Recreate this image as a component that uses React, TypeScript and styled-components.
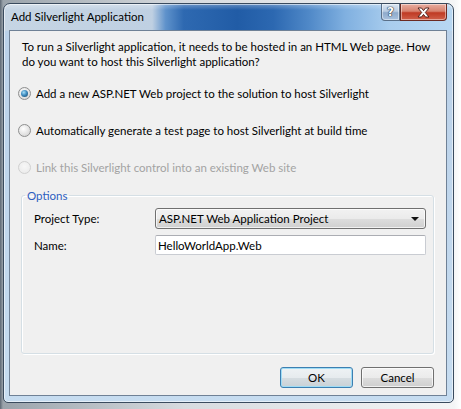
import * as React from 'react';
import styled, { createGlobalStyle } from 'styled-components';

const GlobalStyle = createGlobalStyle`
  html, body {
    margin: 0;
    padding: 0;
  }
  body {
    width: 461px;
    height: 409px;
    overflow: hidden;
    background: linear-gradient(90deg, #5d6874 0px, #9aa3ab 3px, #d7dbdf 40%, #f4f5f6 454px, #ffffff 461px);
    font-family: Lato, 'Open Sans', sans-serif;
  }
`;

const Desktop = styled.div`
  padding: 3px 0 0 3px;
`;

const Window = styled.div`
  width: 451px;
  height: 400px;
  box-sizing: border-box;
  display: flex;
  flex-direction: column;
  padding: 0 6px 6px 5px;
  border: 1px solid #3a4b5e;
  border-radius: 7px 7px 5px 5px;
  overflow: hidden;
  background:
    linear-gradient(180deg, rgba(255, 255, 255, 0.3), rgba(255, 255, 255, 0) 6px) top / 100% 27px no-repeat,
    linear-gradient(
        90deg,
        #c6d5e4 0%,
        #bfd0e2 33%,
        #5f92cb 36%,
        #2e69b1 40%,
        #215ca6 52%,
        #2c68b1 60%,
        #5089c8 68%,
        #80b0e0 76%,
        #a9cdee 86%,
        #b8d7f2 100%
      )
      top / 100% 27px no-repeat,
    linear-gradient(180deg, #b9d0e8, #c6dcf0);
  box-shadow: inset 0 0 0 1px rgba(255, 255, 255, 0.55);
`;

const TitleBar = styled.div`
  height: 26px;
  display: flex;
  align-items: flex-start;
`;

const TitleText = styled.span`
  padding: 5px 0 0 2px;
  font-size: 11.5px;
  line-height: 15px;
  color: #000;
`;

const Captions = styled.div`
  margin-left: auto;
  display: flex;
`;

const CaptionButton = styled.div<{ $kind: 'help' | 'close' }>`
  width: ${({ $kind }) => ($kind === 'help' ? '19px' : '47px')};
  height: 17px;
  box-sizing: border-box;
  display: flex;
  align-items: center;
  justify-content: center;
  border: 1px solid ${({ $kind }) => ($kind === 'help' ? '#5a6f88' : '#6b2a22')};
  border-top: none;
  border-radius: ${({ $kind }) => ($kind === 'help' ? '0 0 0 4px' : '0 0 4px 0')};
  background: ${({ $kind }) =>
    $kind === 'help'
      ? 'linear-gradient(180deg, #dbe6f2 0%, #b9cce2 45%, #8eaacb 55%, #a9c2df 100%)'
      : 'linear-gradient(180deg, #e9ada0 0%, #d7826f 45%, #bf3a24 55%, #d0604a 100%)'};
  box-shadow: inset 0 0 0 1px rgba(255, 255, 255, 0.45);
`;

const HelpGlyph = styled.span`
  font-family: 'DejaVu Sans', sans-serif;
  font-weight: bold;
  font-size: 12px;
  line-height: 12px;
  color: #fff;
  text-shadow: 0 0 1px #1c2b3d, 0 0 1px #1c2b3d, 0 0 1px #1c2b3d;
`;

const Client = styled.div`
  flex: 1;
  display: flex;
  flex-direction: column;
  background: #f0f0f0;
  border: 1px solid #6f8196;
  padding: 8px 12px 7px 8px;
  font-size: 11.5px;
  line-height: 15px;
  color: #000;
`;

const Intro = styled.p`
  margin: 0 0 0 4px;
`;

const RadioRow = styled.label<{ $disabled?: boolean; $first?: boolean }>`
  display: flex;
  align-items: center;
  gap: 5px;
  height: 15px;
  margin-top: ${({ $first }) => ($first ? '17px' : '22px')};
  color: ${({ $disabled }) => ($disabled ? '#a3a3a3' : '#000')};
`;

const RadioCircle = styled.span<{ $checked?: boolean; $disabled?: boolean }>`
  width: 13px;
  height: 13px;
  box-sizing: border-box;
  flex: none;
  border-radius: 50%;
  display: flex;
  align-items: center;
  justify-content: center;
  border: 1px solid ${({ $disabled }) => ($disabled ? '#d0d0d0' : '#8e8f8f')};
  background: ${({ $disabled }) =>
    $disabled
      ? 'radial-gradient(circle at 50% 40%, #f7f7f7, #e8e8e8)'
      : 'radial-gradient(circle at 40% 35%, #ffffff, #dcdcdc 70%, #c8c8c8)'};
  &::after {
    content: '';
    display: ${({ $checked }) => ($checked ? 'block' : 'none')};
    width: 7px;
    height: 7px;
    border-radius: 50%;
    background: radial-gradient(circle at 40% 35%, #a6e0f8 0%, #3f8cc0 45%, #14415e 100%);
  }
`;

const GroupBox = styled.fieldset`
  flex: 1;
  margin: 13px 0 0 3px;
  padding: 5px 7px 0 12px;
  border: 1px solid #d5dfe5;
  border-radius: 3px;
  box-shadow: inset 1px 1px 0 #fff, 1px 1px 0 #fff;
  min-width: 0;
`;

const Legend = styled.legend`
  padding: 0 2px;
  margin-left: -9px;
  color: #2d5ec0;
  line-height: 15px;
`;

const FormGrid = styled.div`
  display: grid;
  grid-template-columns: 121px 1fr;
  row-gap: 6px;
  align-items: center;
`;

const FieldLabel = styled.span`
  color: #000;
`;

const ComboBox = styled.div`
  height: 21px;
  box-sizing: border-box;
  display: flex;
  align-items: center;
  justify-content: space-between;
  padding: 0 6px 0 3px;
  border: 1px solid #707070;
  border-radius: 3px;
  background: linear-gradient(180deg, #f2f2f2 0%, #ebebeb 50%, #dddddd 51%, #cfcfcf 100%);
  box-shadow: inset 0 0 0 1px rgba(255, 255, 255, 0.7);
`;

const Arrow = styled.span`
  width: 0;
  height: 0;
  border-left: 4px solid transparent;
  border-right: 4px solid transparent;
  border-top: 4px solid #111;
`;

const TextInput = styled.input`
  height: 20px;
  box-sizing: border-box;
  margin: 0;
  padding: 0 2px;
  border: 1px solid #c9ccd2;
  border-top-color: #abadb3;
  border-radius: 2px;
  background: #fff;
  font: inherit;
  color: #000;
  outline: none;
`;

const ButtonRow = styled.div`
  display: flex;
  justify-content: flex-end;
  gap: 8px;
  margin-top: 13px;
`;

const PushButton = styled.button<{ $default?: boolean }>`
  width: 73px;
  height: 21px;
  margin: 0;
  padding: 0;
  font: inherit;
  color: #000;
  border: 1px solid ${({ $default }) => ($default ? '#3c7fb1' : '#707070')};
  border-radius: 3px;
  background: ${({ $default }) =>
    $default
      ? 'linear-gradient(180deg, #eef2f4 0%, #e6ebee 50%, #d6dde1 51%, #c9d1d6 100%)'
      : 'linear-gradient(180deg, #f2f2f2 0%, #ebebeb 50%, #dddddd 51%, #cfcfcf 100%)'};
  box-shadow: ${({ $default }) =>
    $default ? 'inset 0 0 0 1px #9fdcf5' : 'inset 0 0 0 1px rgba(255, 255, 255, 0.7)'};
`;

const CloseIcon: React.FC = () => (
  <svg width="13" height="11" viewBox="0 0 13 11">
    <path
      d="M1 1 H4.5 L6.5 3.6 L8.5 1 H12 L8.3 5.5 L12 10 H8.5 L6.5 7.4 L4.5 10 H1 L4.7 5.5 Z"
      fill="#fff"
      stroke="#4a1a14"
      strokeWidth="0.9"
      strokeLinejoin="round"
    />
  </svg>
);

const App: React.FC = () => (
  <Desktop>
    <GlobalStyle />
    <Window>
      <TitleBar>
        <TitleText>Add Silverlight Application</TitleText>
        <Captions>
          <CaptionButton $kind="help">
            <HelpGlyph>?</HelpGlyph>
          </CaptionButton>
          <CaptionButton $kind="close">
            <CloseIcon />
          </CaptionButton>
        </Captions>
      </TitleBar>
      <Client>
        <Intro>
          To run a Silverlight application, it needs to be hosted in an HTML Web page. How do you want to host this
          Silverlight application?
        </Intro>
        <RadioRow $first>
          <RadioCircle $checked />
          Add a new ASP.NET Web project to the solution to host Silverlight
        </RadioRow>
        <RadioRow>
          <RadioCircle />
          Automatically generate a test page to host Silverlight at build time
        </RadioRow>
        <RadioRow $disabled>
          <RadioCircle $disabled />
          Link this Silverlight control into an existing Web site
        </RadioRow>
        <GroupBox>
          <Legend>Options</Legend>
          <FormGrid>
            <FieldLabel>Project Type:</FieldLabel>
            <ComboBox>
              <span>ASP.NET Web Application Project</span>
              <Arrow />
            </ComboBox>
            <FieldLabel>Name:</FieldLabel>
            <TextInput readOnly value="HelloWorldApp.Web" />
          </FormGrid>
        </GroupBox>
        <ButtonRow>
          <PushButton $default>OK</PushButton>
          <PushButton>Cancel</PushButton>
        </ButtonRow>
      </Client>
    </Window>
  </Desktop>
);

export default App;
